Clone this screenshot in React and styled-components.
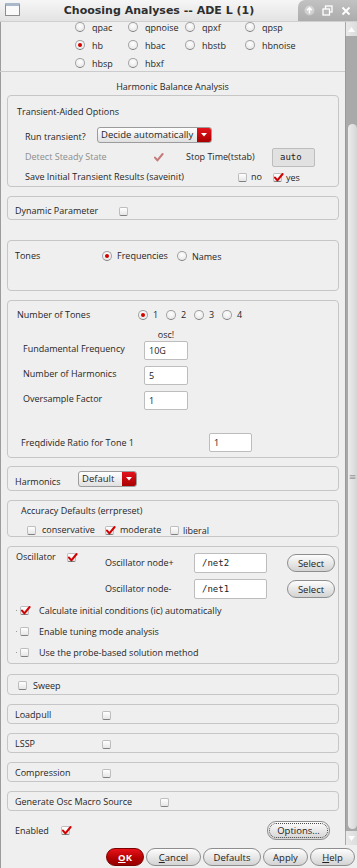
import React from 'react';
import styled, { createGlobalStyle } from 'styled-components';

const GlobalStyle = createGlobalStyle`
  html, body { margin: 0; padding: 0; }
  body {
    background: #efefef;
    font-family: "Open Sans", "DejaVu Sans", sans-serif;
    font-size: 9px;
    color: #262626;
  }
`;

const Window = styled.div`
  width: 357px;
  height: 868px;
  display: flex;
  flex-direction: column;
  overflow: hidden;
  background: #efefef;
  box-shadow: inset 1px 0 0 #9c9c9c;
`;

const TitleBar = styled.div`
  height: 22px;
  flex: none;
  display: flex;
  box-sizing: border-box;
  background: linear-gradient(#f6f6f6, #e3e3e3);
  border-bottom: 1px solid #cfcfcf;
`;

const AppIcon = styled.div`
  width: 15px;
  height: 13px;
  margin: 3px 0 0 5px;
  box-sizing: border-box;
  border: 1px solid #8d8d8d;
  border-top: 3px solid #a9b9c9;
  background: #fafafa;
  border-radius: 1px;
`;

const Title = styled.div`
  flex: 1;
  text-align: center;
  font-family: "DejaVu Sans", sans-serif;
  font-weight: bold;
  font-size: 11px;
  line-height: 21px;
  color: #2e2e2e;
`;

const WinButtons = styled.div`
  width: 59px;
  display: flex;
  align-items: center;
  justify-content: space-around;
  padding: 0 2px;
  box-sizing: border-box;
  background: linear-gradient(#c2c2c2, #acacac);
  border-top-left-radius: 7px;
`;

const Main = styled.div`
  flex: 1;
  min-height: 0;
  display: flex;
`;

const Content = styled.div`
  flex: 1;
  overflow: hidden;
`;

const Scrollbar = styled.div`
  width: 12px;
  flex: none;
  display: flex;
  flex-direction: column;
  background: #a9a9a9;
`;

const ArrowBox = styled.div`
  height: 14px;
  flex: none;
  display: flex;
  align-items: center;
  justify-content: center;
  background: linear-gradient(90deg, #e9e9e9, #dcdcdc);
  margin-left: 1px;
`;

const Track = styled.div`
  flex: 1;
  display: flex;
  flex-direction: column;
  padding: 88px 0 2px 2px;
  border-left: 1px solid #9a9a9a;
`;

const Thumb = styled.div`
  flex: 1;
  border-radius: 5px;
  background: linear-gradient(90deg, #ececec, #d6d6d6);
  display: flex;
  align-items: center;
  justify-content: center;
  color: #9a9a9a;
  font-size: 9px;
`;

const RadioGrid = styled.div`
  display: grid;
  grid-template-columns: 53px 57px 60px 1fr;
  grid-auto-rows: 18px;
  margin-top: -4px;
  padding-left: 75px;
`;

const Separator = styled.div`
  height: 1px;
  margin-top: -1px;
  background: #cbcbcb;
`;

const SectionTitle = styled.div`
  height: 23px;
  box-sizing: border-box;
  padding-top: 8px;
  line-height: 14px;
  text-align: center;
`;

const Group = styled.div`
  margin: ${p => p.$mt ?? 9}px 6px 0 7px;
  border: 1px solid #c6c6c6;
  border-radius: 4px;
  padding: ${p => p.$pt ?? 0}px 0 ${p => p.$pb ?? 0}px ${p => p.$pl ?? 7}px;
  box-sizing: border-box;
  height: ${p => (p.$h ? `${p.$h}px` : 'auto')};
`;

const GroupTitle = styled.div`
  line-height: 14px;
  margin: ${p => p.$mt ?? 0}px 0 0 ${p => p.$ml ?? 0}px;
`;

const Row = styled.div`
  display: flex;
  align-items: ${p => p.$align ?? 'center'};
  height: ${p => p.$h ?? 14}px;
  margin-top: ${p => p.$mt ?? 0}px;
  padding-left: ${p => p.$pl ?? 0}px;
`;

const Cell = styled.div`
  flex: none;
  width: ${p => p.$w}px;
  display: flex;
  align-items: center;
  line-height: ${p => p.$lh ?? 14}px;
  margin-top: ${p => p.$mt ?? 0}px;
  justify-content: ${p => p.$center ? 'center' : 'flex-start'};
  color: ${p => p.$disabled ? '#8d8d8d' : 'inherit'};
`;

const Option = styled.label`
  display: flex;
  align-items: center;
  gap: ${p => p.$gap ?? 7}px;
  white-space: nowrap;
`;

const RadioDot = styled.span`
  width: 10px;
  height: 10px;
  flex: none;
  box-sizing: border-box;
  border-radius: 50%;
  border: 1px solid #a3a3a3;
  border-bottom-color: #7e7e7e;
  background: radial-gradient(circle at 50% 35%, #ffffff, #e2e2e2);
  display: flex;
  align-items: center;
  justify-content: center;
  &::after {
    content: '';
    width: 4px;
    height: 4px;
    border-radius: 50%;
    background: ${p => p.$on ? '#d30000' : 'transparent'};
  }
`;

const Box = styled.span`
  position: relative;
  width: 9px;
  height: 9px;
  flex: none;
  box-sizing: border-box;
  border-radius: 2px;
  border: 1px solid ${p => p.$faint ? 'transparent' : '#bdbdbd'};
  border-bottom-color: ${p => p.$faint ? 'transparent' : '#7f7f7f'};
  background: ${p => p.$faint ? 'transparent' : 'linear-gradient(#ffffff, #e6e6e6)'};
  svg {
    position: absolute;
    left: -1px;
    top: -2px;
  }
`;

const Dot = styled.span`
  width: 1px;
  height: 1px;
  background: #9a9a9a;
  margin-right: 3px;
`;

const Field = styled.div`
  width: ${p => p.$w}px;
  height: ${p => p.$h ?? 19}px;
  flex: none;
  box-sizing: border-box;
  border: 1px solid #bdbdbd;
  border-radius: 2px;
  background: ${p => p.$gray ? '#e1e1e1' : '#ffffff'};
  display: flex;
  align-items: center;
  padding-left: ${p => p.$mono ? 7 : 4}px;
  font-family: ${p => p.$mono ? '"DejaVu Sans Mono", "Liberation Mono", monospace' : 'inherit'};
  font-size: 9px;
  color: #222;
`;

const Combo = styled.div`
  width: ${p => p.$w}px;
  height: 16px;
  flex: none;
  box-sizing: border-box;
  border: 1px solid #9c9c9c;
  border-radius: 3px;
  display: flex;
  overflow: hidden;
  background: linear-gradient(#ffffff, #e0e0e0);
  margin-top: ${p => p.$mt ?? 0}px;
`;

const ComboText = styled.div`
  flex: 1;
  padding-left: 3px;
  line-height: 13px;
  font-size: 9.5px;
`;

const ComboArrow = styled.div`
  width: 14px;
  display: flex;
  align-items: center;
  justify-content: center;
  background: linear-gradient(#e3141c, #a90000);
`;

const PushButton = styled.div`
  width: ${p => p.$w}px;
  height: ${p => p.$h ?? 18}px;
  flex: none;
  box-sizing: border-box;
  border-radius: 9px;
  border: 1px solid ${p => p.$primary ? '#7a0000' : '#8e8e8e'};
  background: ${p => p.$primary
    ? 'linear-gradient(#e8131b, #b00000 60%, #960000)'
    : 'linear-gradient(#fdfdfd, #e6e6e6 55%, #d3d3d3)'};
  color: ${p => p.$primary ? '#fff' : '#222'};
  font-weight: ${p => p.$primary ? 'bold' : 'normal'};
  display: flex;
  align-items: center;
  justify-content: center;
  font-size: 9.5px;
  outline: ${p => p.$focus ? '1px dotted #4a4a4a' : 'none'};
  outline-offset: -3px;
`;

const OscTop = styled.div`
  display: flex;
  padding: 3px 0 0 8px;
`;

const OscNodes = styled.div`
  display: grid;
  grid-template-columns: 89px 73px 48px;
  column-gap: 0;
  row-gap: 6px;
  margin-top: 3px;
  align-items: center;
  & > :nth-child(3n) { margin-left: 20px; }
`;

const BottomBar = styled.div`
  height: 23px;
  flex: none;
  display: flex;
  justify-content: flex-end;
  gap: 2px;
  padding: 3px 2px 0 0;
  box-sizing: border-box;
`;

const EnabledRow = styled.div`
  display: flex;
  align-items: center;
  height: 19px;
  margin-top: 10px;
  padding: 0 15px;
`;

const OptionsButton = styled(PushButton)`
  margin-left: auto;
`;

const Tick = ({ faint }) => (
  <svg width="11" height="11" viewBox="0 0 11 11">
    <path d="M2 5.6 L4.4 8.4 L9.6 2" fill="none" stroke={faint ? '#c77a7a' : '#d20000'} strokeWidth="2" strokeLinecap="round" strokeLinejoin="round" />
  </svg>
);

const Check = ({ on, faint }) => (
  <Box $faint={faint}>{on && <Tick faint={faint} />}</Box>
);

const Radio = ({ on, label, gap }) => (
  <Option $gap={gap}>
    <RadioDot $on={on} />
    {label}
  </Option>
);

const Triangle = () => (
  <svg width="6" height="4" viewBox="0 0 6 4"><path d="M0 0 L6 0 L3 3.5 Z" fill="#fff" /></svg>
);

const analyses = [
  ['qpac', false], ['qpnoise', false], ['qpxf', false], ['qpsp', false],
  ['hb', true], ['hbac', false], ['hbstb', false], ['hbnoise', false],
  ['hbsp', false], ['hbxf', false],
];

const simpleGroups = [
  ['Loadpull', 87],
  ['LSSP', 87],
  ['Compression', 87],
  ['Generate Osc Macro Source', 145],
];

export default function App() {
  return (
    <Window>
      <GlobalStyle />
      <TitleBar>
        <AppIcon />
        <Title>Choosing Analyses -- ADE L (1)</Title>
        <WinButtons>
          <svg width="11" height="11" viewBox="0 0 11 11">
            <circle cx="5.5" cy="5.5" r="5" fill="#fff" opacity="0.35" />
            <path d="M5.5 8.5 V3 M3 5.3 L5.5 2.8 L8 5.3" stroke="#fff" strokeWidth="1.6" fill="none" />
          </svg>
          <svg width="11" height="11" viewBox="0 0 11 11">
            <rect x="3.5" y="1" width="6.5" height="6" fill="none" stroke="#fff" strokeWidth="1.3" />
            <rect x="1" y="4" width="6.5" height="6" fill="#b8b8b8" stroke="#fff" strokeWidth="1.3" />
          </svg>
          <svg width="10" height="10" viewBox="0 0 10 10">
            <path d="M1.5 1.5 L8.5 8.5 M8.5 1.5 L1.5 8.5" stroke="#fff" strokeWidth="1.8" />
          </svg>
        </WinButtons>
      </TitleBar>

      <Main>
        <Content>
          <RadioGrid>
            {analyses.map(([name, on]) => (
              <Radio key={name} on={on} label={name} />
            ))}
          </RadioGrid>
          <Separator />
          <SectionTitle>Harmonic Balance Analysis</SectionTitle>

          <Group $mt={0} $pl={0}>
            <GroupTitle $mt={9} $ml={9}>Transient-Aided Options</GroupTitle>
            <Row $h={20} $mt={7} $pl={17} $align="flex-start">
              <Cell $w={72} $mt={4}>Run transient?</Cell>
              <Combo $w={115} $mt={1}>
                <ComboText>Decide automatically</ComboText>
                <ComboArrow><Triangle /></ComboArrow>
              </Combo>
            </Row>
            <Row $h={20} $mt={1} $pl={17}>
              <Cell $w={128} $disabled>Detect Steady State</Cell>
              <Cell $w={33}><Check on faint /></Cell>
              <Cell $w={86}>Stop Time(tstab)</Cell>
              <Field $w={43} $gray $mono>auto</Field>
            </Row>
            <Row $h={18} $mt={1} $pl={17}>
              <Cell $w={213}>Save Initial Transient Results (saveinit)</Cell>
              <Cell $w={35}><Option $gap={4}><Check />no</Option></Cell>
              <Option $gap={4}><Check on />yes</Option>
            </Row>
          </Group>

          <Group $pt={6} $h={24}>
            <Row $h={16}>
              <Cell $w={104}>Dynamic Parameter</Cell>
              <Check />
            </Row>
          </Group>

          <Group $mt={20} $pt={8} $h={51}>
            <Row>
              <Cell $w={87}>Tones</Cell>
              <Cell $w={75}><Radio on gap={5} label="Frequencies" /></Cell>
              <Radio gap={5} label="Names" />
            </Row>
          </Group>

          <Group $pt={7} $pb={5} $pl={9}>
            <Row>
              <Cell $w={121}>Number of Tones</Cell>
              {['1', '2', '3', '4'].map((n, i) => (
                <Cell key={n} $w={28}><Radio on={i === 0} gap={5} label={n} /></Cell>
              ))}
            </Row>
            <Row $h={12} $mt={7} $pl={6}>
              <Cell $w={121} />
              <Cell $w={44} $center>osc!</Cell>
            </Row>
            {[['Fundamental Frequency', '10G', 0], ['Number of Harmonics', '5', 6], ['Oversample Factor', '1', 6]].map(([label, val, mt]) => (
              <Row key={label} $h={19} $mt={mt} $pl={6} $align="flex-start">
                <Cell $w={121} $mt={1}>{label}</Cell>
                <Field $w={44}>{val}</Field>
              </Row>
            ))}
            <Row $h={19} $mt={23} $pl={4} $align="flex-start">
              <Cell $w={188} $mt={3}>Freqdivide Ratio for Tone 1</Cell>
              <Field $w={43}>1</Field>
            </Row>
          </Group>

          <Group $mt={8} $pt={4} $h={25}>
            <Row $h={17} $align="flex-start">
              <Cell $w={63} $lh={12} $mt={5}>Harmonics</Cell>
              <Combo $w={59}>
                <ComboText>Default</ComboText>
                <ComboArrow><Triangle /></ComboArrow>
              </Combo>
            </Row>
          </Group>

          <Group $pt={3} $pl={13}>
            <GroupTitle>Accuracy Defaults (errpreset)</GroupTitle>
            <Row $h={12} $mt={6} $pl={6}>
              <Cell $w={78}><Option $gap={6}><Check />conservative</Option></Cell>
              <Cell $w={65}><Option $gap={6}><Check on />moderate</Option></Cell>
              <Option $gap={4}><Check />liberal</Option>
            </Row>
          </Group>

          <Group $pl={0}>
            <OscTop>
              <Row $h={14}>
                <Cell $w={51}>Oscillator</Cell>
                <Cell $w={38}><Check on /></Cell>
              </Row>
              <OscNodes>
                <Cell $w={89}>Oscillator node+</Cell>
                <Field $w={73} $h={20} $mono>/net2</Field>
                <PushButton $w={48}>Select</PushButton>
                <Cell $w={89}>Oscillator node-</Cell>
                <Field $w={73} $h={20} $mono>/net1</Field>
                <PushButton $w={48}>Select</PushButton>
              </OscNodes>
            </OscTop>
            {[['Calculate initial conditions (ic) automatically', true], ['Enable tuning mode analysis', false], ['Use the probe-based solution method', false]].map(([label, on], i) => (
              <Row key={label} $h={21} $mt={i === 0 ? 1 : 0} $pl={8}>
                <Dot />
                <Option $gap={10}><Check on={on} />{label}</Option>
              </Row>
            ))}
          </Group>

          <Group $mt={10} $pt={3} $h={21} $pl={10}>
            <Row>
              <Option $gap={6}><Check />Sweep</Option>
            </Row>
          </Group>

          {simpleGroups.map(([label, w]) => (
            <Group key={label} $pt={3} $h={20}>
              <Row>
                <Cell $w={w}>{label}</Cell>
                <Check />
              </Row>
            </Group>
          ))}

          <EnabledRow>
            <Cell $w={46}>Enabled</Cell>
            <Check on />
            <OptionsButton $w={63} $h={19} $focus>Options...</OptionsButton>
          </EnabledRow>
        </Content>

        <Scrollbar>
          <ArrowBox>
            <svg width="7" height="5" viewBox="0 0 7 5"><path d="M0 5 L3.5 0 L7 5 Z" fill="#fdfdfd" /></svg>
          </ArrowBox>
          <Track>
            <Thumb>≡</Thumb>
          </Track>
          <ArrowBox>
            <svg width="7" height="5" viewBox="0 0 7 5"><path d="M0 0 L7 0 L3.5 5 Z" fill="#fdfdfd" /></svg>
          </ArrowBox>
        </Scrollbar>
      </Main>

      <BottomBar>
        <PushButton $w={38} $primary><u>O</u>K</PushButton>
        <PushButton $w={55}><u>C</u>ancel</PushButton>
        <PushButton $w={58}>Defaults</PushButton>
        <PushButton $w={45}>Apply</PushButton>
        <PushButton $w={45}><u>H</u>elp</PushButton>
      </BottomBar>
    </Window>
  );
}
